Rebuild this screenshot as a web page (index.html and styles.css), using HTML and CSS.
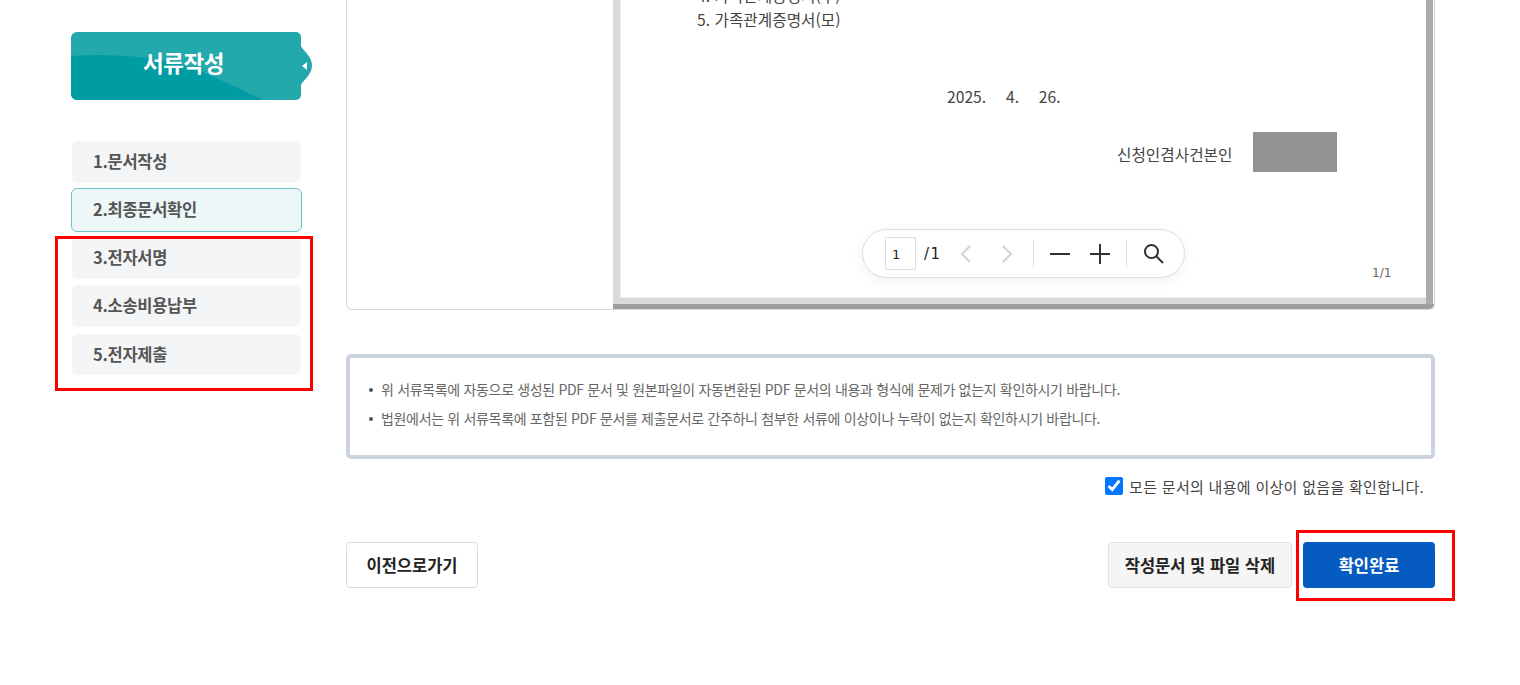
FILE: index.html
```html
<!DOCTYPE html>
<html lang="ko">
<head>
    <meta charset="UTF-8">
    <meta name="viewport" content="width=device-width, initial-scale=1.0">
    <title>서류작성</title>
    <link rel="stylesheet" href="styles.css">
</head>
<body>
    <div class="wrap">
        <aside class="side">
            <div class="side-title">
                <svg class="side-bg" width="242" height="68" viewBox="0 0 242 68">
                    <path d="M6 0H225a5 5 0 0 1 5 5V14C232 19 241 24 241 33.500C241 43 232 48 230 53V63a5 5 0 0 1-5 5H6a6 6 0 0 1-6-6V6a6 6 0 0 1 6-6Z" fill="#23a8ab"/>
                    <path d="M0 24C40 21 85 25 112 33C135 40 160 53 192 68H6a6 6 0 0 1-6-6Z" fill="#009ca3"/>
                    <path d="M231 34L236 30V38Z" fill="#fff"/>
                </svg>
                <span>서류작성</span>
            </div>
            <ul class="steps">
                <li>1.문서작성</li>
                <li class="on">2.최종문서확인</li>
                <li>3.전자서명</li>
                <li>4.소송비용납부</li>
                <li class="last">5.전자제출</li>
            </ul>
        </aside>

        <main class="main">
            <section class="viewer">
                <div class="viewer-left"></div>
                <div class="pdf">
                    <div class="pdf-page">
                        <p class="doc-line">4. 가족관계증명서(부)</p>
                        <p class="doc-line">5. 가족관계증명서(모)</p>
                        <p class="doc-date">2025.&nbsp;&nbsp; 4.&nbsp;&nbsp; 26.</p>
                        <div class="doc-sign">
                            <span>신청인겸사건본인</span>
                            <i class="doc-mask"></i>
                        </div>
                        <p class="doc-num">1/1</p>
                    </div>
                    <div class="pdf-tools">
                        <span class="page-box">1</span>
                        <span class="page-total">/1</span>
                        <svg class="tool tool-prev" width="14" height="20" viewBox="0 0 14 20"><path d="M11 2L3 10L11 18" fill="none" stroke="#d2d2d2" stroke-width="2"/></svg>
                        <svg class="tool tool-next" width="14" height="20" viewBox="0 0 14 20"><path d="M3 2L11 10L3 18" fill="none" stroke="#d2d2d2" stroke-width="2"/></svg>
                        <i class="tool-sep sep-a"></i>
                        <svg class="tool tool-minus" width="20" height="20" viewBox="0 0 20 20"><path d="M0 10H20" stroke="#333" stroke-width="2"/></svg>
                        <svg class="tool tool-plus" width="20" height="20" viewBox="0 0 20 20"><path d="M0 10H20M10 0V20" stroke="#333" stroke-width="2"/></svg>
                        <i class="tool-sep sep-b"></i>
                        <svg class="tool tool-search" width="21" height="21" viewBox="0 0 21 21"><circle cx="8.500" cy="8.500" r="6.500" fill="none" stroke="#333" stroke-width="2"/><path d="M13 13L20 20" stroke="#333" stroke-width="2"/></svg>
                    </div>
                </div>
            </section>

            <section class="notice">
                <ul>
                    <li>위 서류목록에 자동으로 생성된 PDF 문서 및 원본파일이 자동변환된 PDF 문서의 내용과 형식에 문제가 없는지 확인하시기 바랍니다.</li>
                    <li>법원에서는 위 서류목록에 포함된 PDF 문서를 제출문서로 간주하니 첨부한 서류에 이상이나 누락이 없는지 확인하시기 바랍니다.</li>
                </ul>
            </section>

            <label class="agree">
                <input type="checkbox" checked>
                <span>모든 문서의 내용에 이상이 없음을 확인합니다.</span>
            </label>

            <div class="actions">
                <button class="btn btn-prev">이전으로가기</button>
                <div class="actions-right">
                    <button class="btn btn-del">작성문서 및 파일 삭제</button>
                    <button class="btn btn-ok">확인완료</button>
                </div>
            </div>
        </main>
    </div>

    <!-- 빨간 표시 박스 -->
    <div class="mark mark-steps"></div>
    <div class="mark mark-ok"></div>
</body>
</html>
```

FILE: styles.css
```css
* {
    box-sizing: border-box;
}
html, body {
    height: 100%;
}
body {
    margin: 0;
    background: #fff;
    color: #333;
    font-family: "Noto Sans CJK KR", "Noto Sans", sans-serif;
    overflow: hidden;
    position: relative;
}
ul {
    list-style: none;
    margin: 0;
    padding: 0;
}
p {
    margin: 0;
}
.wrap {
    display: flex;
    padding-left: 71px;
}

/* 왼쪽 메뉴 */
.side {
    width: 231px;
    padding-top: 32px;
    flex: none;
}
.side-title {
    position: relative;
    height: 68px;
    display: flex;
    align-items: center;
    justify-content: center;
    color: #fff;
    font-size: 22.500px;
    font-weight: 700;
    letter-spacing: -0.5px;
}
.side-bg {
    position: absolute;
    left: 0;
    top: 0;
}
.side-title span {
    position: relative;
    top: -4px;
    left: -3px;
}
.steps {
    margin-top: 41px;
}
.steps li {
    height: 42px;
    margin: 0 1px 6px 1px;
    padding: 0 0 3px 21px;
    display: flex;
    align-items: center;
    background: #f4f5f7;
    border-radius: 6px;
    color: #555;
    font-size: 16.500px;
    font-weight: 700;
    letter-spacing: -0.3px;
}
.steps li:first-child {
    margin-bottom: 5px;
}
.steps li.on {
    height: 44px;
    margin: 0 0 5px 0;
    padding-left: 21px;
    background: #eef7f8;
    border: 1px solid #6cc4c8;
}
.steps li.last {
    height: 41px;
    margin-top: 7px;
    padding-bottom: 1px;
}

/* 문서 보기 */
.main {
    width: 1089px;
    margin-left: 44px;
    flex: none;
}
.viewer {
    height: 310px;
    display: flex;
    border: 1px solid #d9d9d9;
    border-top: 0;
    border-radius: 0 0 6px 6px;
    overflow: hidden;
}
.viewer-left {
    width: 266px;
    flex: none;
}
.pdf {
    flex: 1;
    position: relative;
    background: linear-gradient(#9e9e9e, #9e9e9e) bottom / 100% 5px no-repeat;
    padding: 0 0 5px 0;
    overflow: hidden;
}
.pdf-page {
    background: #fff;
    border-left: 7px solid #d9d9d9;
    border-right: 7px solid #acacac;
    margin-right: 1px;
    box-shadow: inset 0 -6px 0 #d9d9d9, inset 1px -7px 0 #f0f0f0;
    padding: 0 0 0 77px;
    color: #444;
    font-size: 15.700px;
    line-height: 24px;
    margin-top: -16px;
    height: calc(100% + 16px);
}
.doc-line {
    height: 24px;
}
.doc-date {
    margin-top: 52px;
    padding-left: 250px;
    line-height: 26px;
    word-spacing: 2.200px;
}
.doc-sign {
    display: flex;
    align-items: center;
    gap: 21px;
    margin: 22px 0 0 420px;
}
.doc-sign span {
    padding-top: 5px;
}
.doc-mask {
    display: block;
    width: 84px;
    height: 40px;
    background: #929292;
}
.doc-num {
    margin: 92px 0 0 675px;
    font-size: 12px;
    line-height: 18px;
    color: #666;
    font-family: "DejaVu Sans", sans-serif;
}

/* PDF 도구 */
.pdf-tools {
    position: absolute;
    left: 249px;
    top: 229px;
    width: 323px;
    height: 49px;
    background: #fff;
    border: 1px solid #dcdcdc;
    border-radius: 25px;
    box-shadow: 0 4px 14px rgba(0, 0, 0, 0.05);
}
.page-box {
    position: absolute;
    left: 22px;
    top: 7px;
    width: 31px;
    height: 33px;
    border: 1px solid #dcdcdc;
    border-radius: 2px;
    font-family: "DejaVu Sans", sans-serif;
    font-size: 13px;
    line-height: 33px;
    padding-left: 6px;
    color: #222;
}
.page-total {
    position: absolute;
    left: 61px;
    top: 13px;
    font-family: "DejaVu Sans", sans-serif;
    font-size: 15px;
    line-height: 22px;
    letter-spacing: 1.500px;
    color: #222;
}
.tool {
    position: absolute;
    display: block;
}
.tool-prev { left: 96px; top: 14px; }
.tool-next { left: 137px; top: 14px; }
.tool-minus { left: 187px; top: 14px; }
.tool-plus { left: 227px; top: 14px; }
.tool-search { left: 280px; top: 13px; }
.tool-sep {
    position: absolute;
    top: 10px;
    width: 1px;
    height: 27px;
    background: #dcdcdc;
}
.sep-a { left: 170px; }
.sep-b { left: 263px; }

/* 안내 */
.notice {
    height: 105px;
    margin-top: 44px;
    border: 4px solid #cbd3df;
    border-radius: 5px;
    padding: 17px 0 0 18px;
    font-size: 14px;
    line-height: 29px;
    letter-spacing: -0.33px;
    color: #666;
}
.notice li {
    position: relative;
    padding-left: 13px;
}
.notice li::before {
    content: "";
    position: absolute;
    left: 1px;
    top: 13px;
    width: 4px;
    height: 4px;
    border-radius: 50%;
    background: #555;
}
.agree {
    display: flex;
    align-items: center;
    justify-content: flex-end;
    gap: 6px;
    margin-top: 16px;
    padding-right: 11px;
    height: 22px;
    font-size: 15px;
    letter-spacing: 0.3px;
    color: #444;
}
.agree input {
    width: 18px;
    height: 18px;
    margin: 0;
}

/* 버튼 */
.actions {
    display: flex;
    justify-content: space-between;
    margin-top: 45px;
}
.actions-right {
    display: flex;
    gap: 11px;
}
.btn {
    height: 46px;
    border-radius: 4px;
    font-family: inherit;
    font-size: 16.500px;
    font-weight: 700;
    color: #222;
    cursor: pointer;
}
.btn-prev {
    width: 132px;
    background: #fff;
    border: 1px solid #dcdcdc;
}
.btn-del {
    width: 184px;
    background: #f5f5f5;
    border: 1px solid #e2e2e2;
}
.btn-ok {
    width: 132px;
    background: #055bbf;
    border: 0;
    color: #fff;
}

/* 빨간 박스 */
.mark {
    position: absolute;
    border: 3px solid #f00;
}
.mark-steps {
    left: 55px;
    top: 236px;
    width: 258px;
    height: 155px;
}
.mark-ok {
    left: 1296px;
    top: 530px;
    width: 159px;
    height: 71px;
}
```
